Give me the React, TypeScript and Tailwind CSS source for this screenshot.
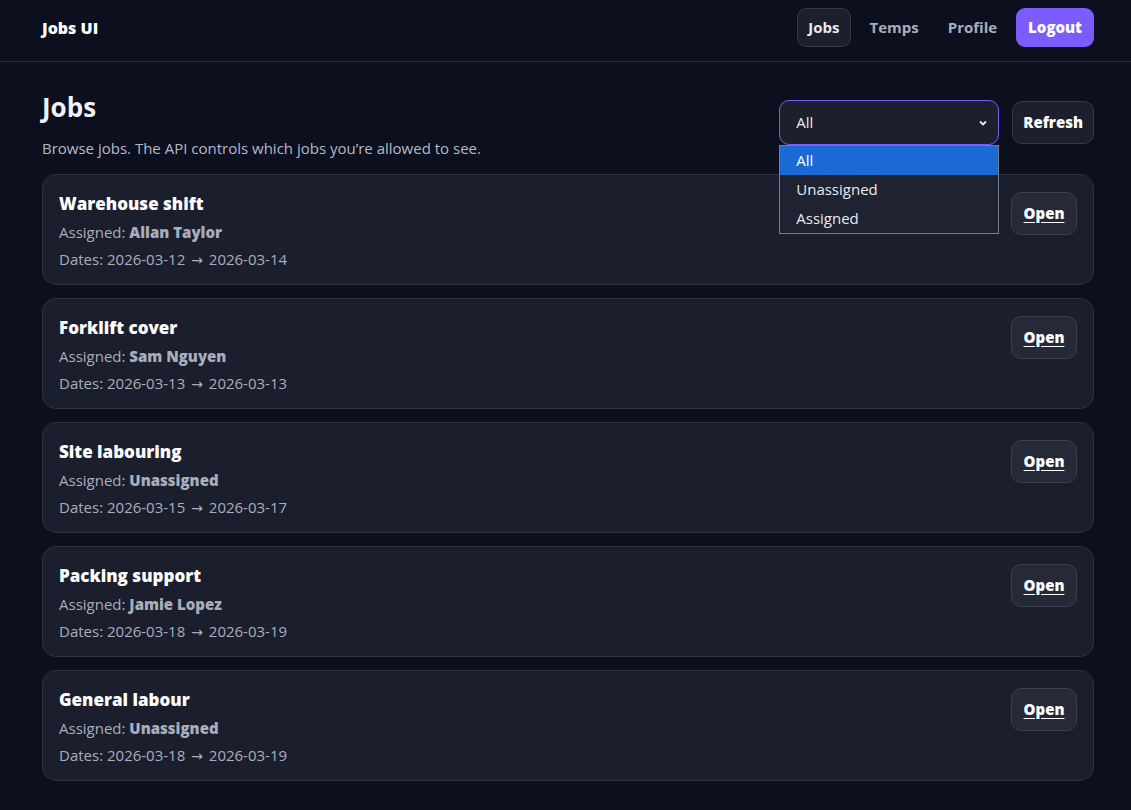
import { useState } from "react";

type Job = {
  id: number;
  title: string;
  assignee: string | null;
  start: string;
  end: string;
};

const jobs: Job[] = [
  { id: 1, title: "Warehouse shift", assignee: "Allan Taylor", start: "2026-03-12", end: "2026-03-14" },
  { id: 2, title: "Forklift cover", assignee: "Sam Nguyen", start: "2026-03-13", end: "2026-03-13" },
  { id: 3, title: "Site labouring", assignee: null, start: "2026-03-15", end: "2026-03-17" },
  { id: 4, title: "Packing support", assignee: "Jamie Lopez", start: "2026-03-18", end: "2026-03-19" },
  { id: 5, title: "General labour", assignee: null, start: "2026-03-18", end: "2026-03-19" },
];

const filters = ["All", "Unassigned", "Assigned"];

const App = () => {
  const [filter, setFilter] = useState("All");

  return (
    <div className="min-h-screen bg-[#0b0f1e] text-[#e8eaf0] font-['Open_Sans','Noto_Sans',sans-serif]">
      {/* Top bar */}
      <header className="h-[62px] border-b border-[#262b3a] pl-[42px] pr-[37px] pt-[8px] flex items-start justify-between">
        <div className="h-[39px] flex items-center">
          <span className="text-[16px] font-extrabold text-white">Jobs UI</span>
        </div>
        <nav className="flex items-center gap-[9px]">
          <button className="h-[39px] px-[10px] rounded-[9px] border border-[#343a4a] bg-[#1c202d] text-[15px] font-bold text-[#e8eaf0]">
            Jobs
          </button>
          <button className="h-[39px] px-[10px] rounded-[9px] text-[15px] font-bold text-[#a9aebb]">Temps</button>
          <button className="h-[39px] px-[10px] rounded-[9px] text-[15px] font-bold text-[#a9aebb]">Profile</button>
          <button className="h-[39px] px-[12px] rounded-[9px] bg-[#7c5cfc] text-[15px] font-extrabold text-white">
            Logout
          </button>
        </nav>
      </header>

      <main className="pl-[42px] pr-[37px] pt-[28px]">
        <div className="flex items-start justify-between">
          <div>
            <h1 className="text-[26px] font-bold leading-[34px] text-[#f1f2f6]">Jobs</h1>
            <p className="mt-[13px] text-[15px] text-[#b6bac6]">
              Browse jobs. The API controls which jobs you’re allowed to see.
            </p>
          </div>
          <div className="flex items-center gap-[13px] mt-[10px]">
            <div className="relative">
              <div className="w-[220px] h-[45px] rounded-[10px] border border-[#7c5cfc] bg-[#1c202d] pl-[16px] pr-[10px] flex items-center justify-between text-[15px] text-[#e8eaf0]">
                <span>{filter}</span>
                <svg width="10" height="10" viewBox="0 0 10 10" fill="none" stroke="#e8eaf0" strokeWidth="1.8">
                  <path d="M2 3.5l3 3 3-3" />
                </svg>
              </div>
              {/* open dropdown list */}
              <ul className="absolute left-0 top-[45px] w-[220px] border border-[#7a7e88] bg-[#1f2230] text-[15px] z-10">
                {filters.map((f) => (
                  <li
                    key={f}
                    onClick={() => setFilter(f)}
                    className={
                      f === filter
                        ? "h-[29px] pl-[16px] flex items-center bg-[#1a69d4] text-white"
                        : "h-[29px] pl-[16px] flex items-center text-[#e8eaf0]"
                    }
                  >
                    {f}
                  </li>
                ))}
              </ul>
            </div>
            <button className="h-[43px] px-[10px] rounded-[10px] border border-[#343a4a] bg-[#1c202d] text-[15px] font-extrabold text-white">
              Refresh
            </button>
          </div>
        </div>

        <div className="mt-[14px] flex flex-col gap-[13px]">
          {jobs.map((job) => (
            <div
              key={job.id}
              className="h-[111px] rounded-[14px] border border-[#2e3344] bg-[#1b1f2d] pl-[16px] pr-[16px] pt-[17px] flex justify-between items-start"
            >
              <div>
                <h3 className="text-[17px] font-extrabold leading-[24px] text-white">{job.title}</h3>
                <p className="mt-[6px] text-[15px] leading-[21px] text-[#a9aebb]">
                  Assigned: <strong className="font-extrabold">{job.assignee ?? "Unassigned"}</strong>
                </p>
                <p className="mt-[6px] text-[15px] leading-[21px] text-[#a9aebb]">
                  Dates: {job.start}{" "}
                  <span className="px-[2px] font-['DejaVu_Sans',sans-serif] text-[14px]">→</span> {job.end}
                </p>
              </div>
              <button className="h-[43px] w-[66px] rounded-[10px] border border-[#3a3f4f] bg-[#252938] text-[15px] font-extrabold text-white underline underline-offset-[3px]">
                Open
              </button>
            </div>
          ))}
        </div>
      </main>
    </div>
  );
};

export default App;
